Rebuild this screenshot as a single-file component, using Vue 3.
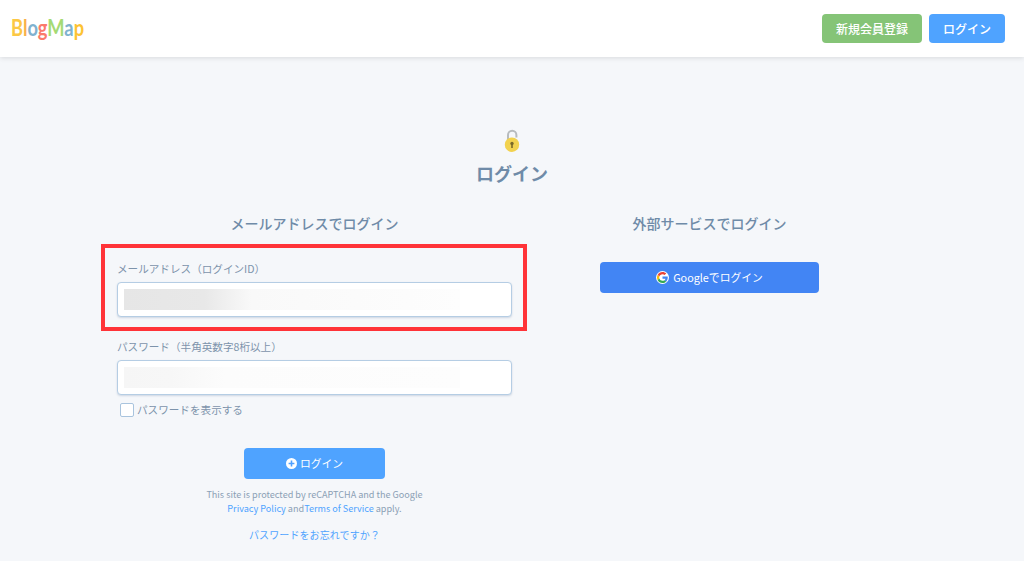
<script setup>
const logo = [
  { c: 'B', color: '#fcc844' },
  { c: 'l', color: '#f9b04a' },
  { c: 'o', color: '#7fb2cf' },
  { c: 'g', color: '#fb7a6b' },
  { c: 'M', color: '#a5da74' },
  { c: 'a', color: '#7fb2cf' },
  { c: 'p', color: '#fdc333' },
]
</script>

<template>
  <div class="page">
    <header class="header">
      <div class="logo"><span v-for="(l, i) in logo" :key="i" :style="{ color: l.color }">{{ l.c }}</span></div>
      <div class="header-actions">
        <button class="btn btn-green">新規会員登録</button>
        <button class="btn btn-blue">ログイン</button>
      </div>
    </header>
    <main class="main">
      <svg class="lock" width="20" height="24" viewBox="0 0 20 24">
        <path d="M6 11V6a4.2 4.2 0 0 1 8.400 0V8.500" fill="none" stroke="#b7bbbe" stroke-width="2"/>
        <circle cx="10" cy="15.700" r="7.200" fill="#f2d24f"/>
        <circle cx="10" cy="14.500" r="1.700" fill="#7a6a2a"/>
        <rect x="9.200" y="14.800" width="1.600" height="4.200" fill="#7a6a2a"/>
      </svg>
      <h1 class="title">ログイン</h1>
      <div class="columns">
        <section class="col-left">
          <h2 class="heading">メールアドレスでログイン</h2>
          <div class="field field-email">
            <span class="highlight"></span>
            <label class="label">メールアドレス（ログインID）</label>
            <div class="input"><div class="blur blur-a"></div></div>
          </div>
          <div class="field field-pass">
            <label class="label">パスワード（半角英数字8桁以上）</label>
            <div class="input"><div class="blur blur-b"></div></div>
          </div>
          <div class="check-row"><span class="check"></span><span class="check-label">パスワードを表示する</span></div>
          <button class="btn-submit">
            <svg width="11" height="11" viewBox="0 0 11 11"><circle cx="5.500" cy="5.500" r="5.500" fill="#fff"/><path d="M5.500 2.600v5.800M2.600 5.500h5.800" stroke="#4fa0ff" stroke-width="1.600"/></svg>
            <span>ログイン</span>
          </button>
          <p class="legal">This site is protected by reCAPTCHA and the Google<br><a>Privacy Policy</a> and<a>Terms of Service</a> apply.</p>
          <a class="forgot">パスワードをお忘れですか？</a>
        </section>
        <section class="col-right">
          <h2 class="heading">外部サービスでログイン</h2>
          <button class="btn-google">
            <span class="g-badge">
              <svg width="11" height="11" viewBox="0 0 48 48">
                <path fill="#EA4335" d="M24 9.500c3.500 0 6.700 1.200 9.200 3.600l6.900-6.900C35.900 2.400 30.500 0 24 0 14.600 0 6.500 5.400 2.600 13.200l8 6.200C12.400 13.700 17.700 9.500 24 9.500z"/>
                <path fill="#4285F4" d="M46.900 24.500c0-1.600-.1-3.100-.4-4.500H24v9h12.900c-.6 3-2.200 5.500-4.700 7.200l7.700 6c4.500-4.200 7-10.300 7-17.700z"/>
                <path fill="#FBBC05" d="M10.500 28.600c-.5-1.400-.8-3-.8-4.600s.3-3.200.8-4.600l-8-6.200C.9 16.500 0 20.100 0 24s.9 7.500 2.600 10.800l7.900-6.200z"/>
                <path fill="#34A853" d="M24 48c6.500 0 11.900-2.100 15.900-5.800l-7.700-6c-2.200 1.500-4.900 2.300-8.200 2.300-6.300 0-11.600-4.200-13.500-9.900l-8 6.200C6.500 42.600 14.600 48 24 48z"/>
              </svg>
            </span>
            <span>Googleでログイン</span>
          </button>
        </section>
      </div>
    </main>
  </div>
</template>

<style>
html, body { margin: 0; background: #f5f7fa; }
</style>

<style scoped>
.page {
  height: 561px;
  overflow: hidden;
  background: #f5f7fa;
  font-family: "Noto Sans CJK JP", "Noto Sans", sans-serif;
  color: #6f8ba8;
}
.header {
  height: 57px;
  box-sizing: border-box;
  background: #fff;
  box-shadow: 0 1px 5px rgba(0, 0, 0, 0.12);
  display: flex;
  align-items: center;
  justify-content: space-between;
  padding: 0 19px 0 11px;
}
.logo {
  font-family: Lato, sans-serif;
  font-size: 22px;
  line-height: 26px;
  font-weight: 700;
  margin-top: -2px;
  transform: scaleX(0.83);
  transform-origin: left center;
}
.header-actions { display: flex; gap: 7px; }
.btn {
  height: 29px;
  border: 0;
  border-radius: 4px;
  color: #fff;
  font: 500 12px/29px "Noto Sans CJK JP", sans-serif;
  padding: 0;
}
.btn-green { width: 100px; background: #85c477; }
.btn-blue { width: 76px; background: #4fa3ff; }
.main {
  display: flex;
  flex-direction: column;
  align-items: center;
  padding-top: 72px;
}
.lock { display: block; }
.title {
  margin: 7px 0 0;
  font-size: 18px;
  line-height: 26px;
  font-weight: 700;
  color: #6f8ba8;
}
.columns {
  width: 100%;
  display: flex;
  padding-left: 117px;
  box-sizing: border-box;
  margin-top: 27px;
}
.col-left {
  width: 395px;
  display: flex;
  flex-direction: column;
  align-items: center;
}
.col-right {
  width: 219px;
  margin-left: 88px;
  display: flex;
  flex-direction: column;
  align-items: center;
}
.heading {
  margin: 0;
  font-size: 14px;
  line-height: 20px;
  font-weight: 500;
  white-space: nowrap;
  color: #6f8ba8;
}
.field { width: 100%; position: relative; }
.field-email { margin-top: 28px; }
.field-pass { margin-top: 22px; }
.highlight {
  position: absolute;
  left: -16px;
  top: -17px;
  width: 426px;
  height: 87px;
  box-sizing: border-box;
  border: 4px solid #ff3338;
  pointer-events: none;
}
.label {
  display: block;
  font-size: 10.600px;
  line-height: 16px;
  color: #7d93ab;
  margin-bottom: 5px;
}
.input {
  height: 35px;
  box-sizing: border-box;
  background: #fff;
  border: 1px solid #b5cde4;
  border-radius: 4px;
  box-shadow: 0 1px 2px rgba(90, 120, 160, 0.25);
  padding: 6px 51px 6px 6px;
  overflow: hidden;
}
.blur { height: 21px; }
.blur-a { background: linear-gradient(90deg, #e6e6e6 0%, #e8e8e8 24%, #f9f9f9 38%, #fdfdfd 100%); }
.blur-b { background: linear-gradient(90deg, #f6f6f6 0%, #f7f7f7 14%, #fcfcfc 30%, #fdfdfd 100%); }
.check-row {
  align-self: flex-start;
  display: flex;
  align-items: center;
  gap: 3px;
  margin: 7px 0 0 3px;
  height: 15px;
}
.check {
  width: 14px;
  height: 14px;
  box-sizing: border-box;
  background: #fff;
  border: 1px solid #a9c4de;
  border-radius: 2px;
}
.check-label { font-size: 10.600px; line-height: 15px; color: #7d93ab; }
.btn-submit {
  margin-top: 31px;
  width: 141px;
  height: 31px;
  border: 0;
  border-radius: 4px;
  background: #4fa3ff;
  color: #fff;
  display: flex;
  align-items: center;
  justify-content: center;
  gap: 3px;
  font: 400 10.800px/31px "Noto Sans CJK JP", sans-serif;
  padding: 0;
}
.legal {
  margin: 8px 0 0;
  text-align: center;
  font-size: 9.100px;
  line-height: 14px;
  color: #8ba0b5;
  white-space: nowrap;
}
.legal a, .forgot { color: #4fa3ff; }
.forgot { margin-top: 13px; font-size: 10px; line-height: 14px; letter-spacing: 0.1px; }
.btn-google {
  margin-top: 29px;
  width: 219px;
  height: 31px;
  border: 0;
  border-radius: 4px;
  background: #4285f4;
  color: #fff;
  display: flex;
  align-items: center;
  justify-content: center;
  gap: 4px;
  font: 400 10.800px/31px "Noto Sans CJK JP", sans-serif;
  padding: 0;
}
.g-badge {
  width: 13px;
  height: 13px;
  border-radius: 50%;
  background: #fff;
  display: flex;
  align-items: center;
  justify-content: center;
}
</style>
